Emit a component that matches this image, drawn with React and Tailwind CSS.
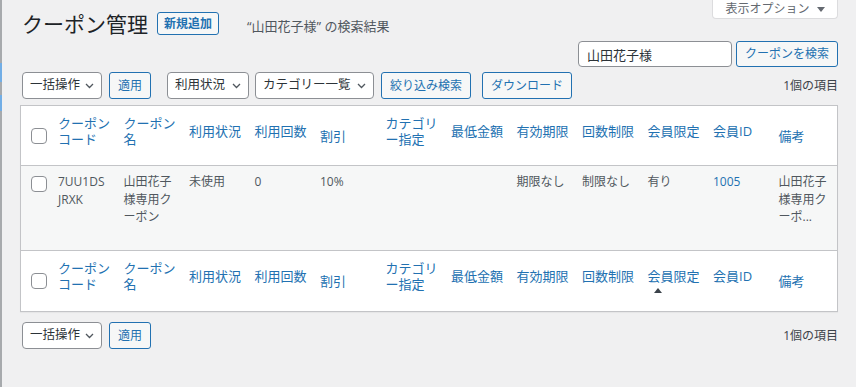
import React from "react";

const columns = [
  { label: ["クーポン", "コード"], sortable: true },
  { label: ["クーポン", "名"], sortable: true },
  { label: ["利用状況"], sortable: true },
  { label: ["利用回数"], sortable: true },
  { label: ["割引"], sortable: false },
  { label: ["カテゴリ", "ー指定"], sortable: true },
  { label: ["最低金額"], sortable: true },
  { label: ["有効期限"], sortable: true },
  { label: ["回数制限"], sortable: true },
  { label: ["会員限定"], sortable: true },
  { label: ["会員ID"], sortable: true },
  { label: ["備考"], sortable: false },
];

const coupon = [
  ["7UU1DS", "JRXK"],
  ["山田花子", "様専用ク", "ーポン"],
  ["未使用"],
  ["0"],
  ["10%"],
  [],
  [],
  ["期限なし"],
  ["制限なし"],
  ["有り"],
  { link: "1005" },
  ["山田花子", "様専用ク", "ーポ..."],
];

function Chevron() {
  return (
    <svg width="9" height="6" viewBox="0 0 9 6" fill="none">
      <polyline points="1,1 4.5,4.5 8,1" stroke="#50575e" strokeWidth="1.3" />
    </svg>
  );
}

function Select({ label, width }) {
  return (
    <div className={`${width} h-[27px] border border-[#8c8f94] rounded-[4px] bg-white flex items-center justify-between pl-[7px] pr-[7px] text-[12.5px] text-[#2c3338] whitespace-nowrap`}>
      <span>{label}</span>
      <Chevron />
    </div>
  );
}

function Button({ children, width }) {
  return (
    <button className={`${width} h-[27px] border border-[#2271b1] rounded-[3px] bg-[#f6f7f7] text-[#2271b1] text-[12px] whitespace-nowrap`}>
      {children}
    </button>
  );
}

function Checkbox({ className = "" }) {
  return <div className={`w-[16px] h-[16px] border border-[#8c8f94] rounded-[4px] bg-white ${className}`} />;
}

function HeaderRow({ sorted, className = "" }) {
  return (
    <div className={`grid grid-cols-[29px_repeat(11,65.5px)_1fr] h-[60px] ${className}`}>
      <div className="flex items-center pl-[10px]">
        <Checkbox />
      </div>
      {columns.map((col) => (
        <div key={col.label.join("")} className="flex items-center pl-[8px] text-[13px] text-[#2271b1] whitespace-nowrap">
          {col.sortable ? (
            <div className="flex flex-col">
              {col.label.map((l) => (
                <span key={l} className="leading-[16px]">{l}</span>
              ))}
              <div className="h-[10px]">
                {sorted === col.label[0] && (
                  <div className="mt-[4px] ml-[6px] w-0 h-0 border-l-[4px] border-r-[4px] border-b-[5px] border-l-transparent border-r-transparent border-b-[#3c434a]" />
                )}
              </div>
            </div>
          ) : (
            <span className="leading-[16px]">{col.label[0]}</span>
          )}
        </div>
      ))}
    </div>
  );
}

function DataRow() {
  return (
    <div className="grid grid-cols-[29px_repeat(11,65.5px)_1fr] h-[85px] bg-[#f6f7f7] border-b border-[#c3c4c7]">
      <div className="pl-[10px]">
        <Checkbox className="mt-[10px]" />
      </div>
      {coupon.map((cell, i) => (
        <div key={i} className="pl-[8px] pt-[7px] text-[12px] leading-[17.5px] text-[#50575e] whitespace-nowrap">
          {Array.isArray(cell) ? (
            cell.map((l) => <div key={l}>{l}</div>)
          ) : (
            <span className="text-[#2271b1]">{cell.link}</span>
          )}
        </div>
      ))}
    </div>
  );
}

function Actions() {
  return (
    <>
      <Select label="一括操作" width="w-[80px]" />
      <div className="ml-[7px]">
        <Button width="w-[42px]">適用</Button>
      </div>
    </>
  );
}

export default function App() {
  return (
    <div className="w-[856px] min-h-[387px] bg-[#f0f0f1] flex font-['Open_Sans','Noto_Sans_CJK_JP',sans-serif]">
      <div className="w-[2px] flex flex-col bg-[#a7aaad]">
        <div className="h-[63px]" />
        <div className="h-[19px] bg-[#72aee6]" />
        <div className="h-[13px]" />
        <div className="h-[16px] bg-[#72aee6]" />
      </div>

      <div className="flex-1 pl-[18px] pr-[18px]">
        <div className="flex justify-between items-start h-[35px]">
          <div className="flex items-center mt-[12px] h-[23px] pl-[2px]">
            <h1 className="text-[21px] leading-[23px] text-[#1d2327] font-['Noto_Sans_CJK_JP',sans-serif] mr-[9px]">クーポン管理</h1>
            <button className="w-[62px] h-[23px] border border-[#2271b1] rounded-[3px] bg-[#f6f7f7] text-[#2271b1] text-[12px] font-semibold">
              新規追加
            </button>
            <span className="ml-[28px] mt-[7px] text-[13px] text-[#50575e] whitespace-nowrap">“山田花子様” の検索結果</span>
          </div>
          <div className="w-[126px] h-[19px] bg-white border border-t-0 border-[#dcdcde] rounded-b-[4px] flex items-center justify-center gap-[7px] text-[12px] text-[#646970]">
            <span>表示オプション</span>
            <div className="w-0 h-0 border-l-[4px] border-r-[4px] border-t-[5px] border-l-transparent border-r-transparent border-t-[#646970]" />
          </div>
        </div>

        <div className="flex justify-end gap-[4px] mt-[6px]">
          <input
            value="山田花子様"
            readOnly
            className="w-[154px] h-[26px] border border-[#8c8f94] rounded-[4px] bg-white px-[8px] text-[13px] text-[#2c3338] outline-none"
          />
          <button className="w-[102px] h-[26px] border border-[#2271b1] rounded-[3px] bg-[#f6f7f7] text-[#2271b1] text-[12px]">
            クーポンを検索
          </button>
        </div>

        <div className="flex items-center mt-[5px] h-[27px] pl-[2px]">
          <Actions />
          <div className="ml-[16px]">
            <Select label="利用状況" width="w-[82px]" />
          </div>
          <div className="ml-[6px]">
            <Select label="カテゴリー一覧" width="w-[119px]" />
          </div>
          <div className="ml-[7px]">
            <Button width="w-[90px]">絞り込み検索</Button>
          </div>
          <div className="ml-[11px]">
            <Button width="w-[90px]">ダウンロード</Button>
          </div>
          <span className="ml-auto text-[12px] text-[#3c434a]">1個の項目</span>
        </div>

        <div className="mt-[6px] border border-[#c3c4c7] bg-white shadow-[0_1px_1px_rgba(0,0,0,0.04)]">
          <HeaderRow className="border-b border-[#c3c4c7]" />
          <DataRow />
          <HeaderRow sorted="会員限定" />
        </div>

        <div className="flex items-center mt-[10px] h-[27px] pl-[2px]">
          <Actions />
          <span className="ml-auto text-[12px] text-[#3c434a]">1個の項目</span>
        </div>
      </div>
    </div>
  );
}
